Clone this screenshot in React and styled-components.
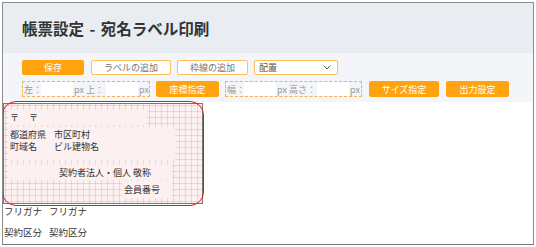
import React from "react";
import styled, { createGlobalStyle } from "styled-components";

const GlobalStyle = createGlobalStyle`
  html, body { margin: 0; padding: 0; background: #fff; }
  body { font-family: "Noto Sans CJK JP", "Noto Sans", sans-serif; }
  * { box-sizing: border-box; }
`;

const Frame = styled.div`
  margin: 2px;
  width: 532px;
  height: 243px;
  border: 1px solid #8c8c8c;
  border-bottom-color: #7a7a7a;
  overflow: hidden;
  background: #fff;
`;

const Header = styled.header`
  height: 50px;
  background: #e9ecf1;
  display: flex;
  align-items: center;
  padding-left: 19px;
`;

const Title = styled.h1`
  margin: 0;
  font-size: 15.5px;
  font-weight: 700;
  color: #333;
  word-spacing: 2px;
`;

const Toolbar = styled.div`
  height: 49px;
  background: #f4f5f9;
  padding: 7px 0 0 19px;
  display: flex;
  flex-direction: column;
  gap: 6px;
`;

const Row = styled.div`
  display: flex;
  align-items: center;
  gap: ${(p) => p.$gap || 6}px;
  height: ${(p) => p.$h || 15}px;
`;

const Button = styled.button`
  width: ${(p) => p.$w}px;
  height: 100%;
  margin: 0 0 0 ${(p) => p.$ml || 0}px;
  padding: 0;
  border-radius: 2px;
  font-family: inherit;
  font-size: 9px;
  line-height: 1;
  cursor: pointer;
  border: 1px solid ${(p) => (p.$primary ? "#ffa30f" : "#ffbd5c")};
  background: ${(p) => (p.$primary ? "#ffa30f" : "#fff")};
  color: ${(p) => (p.$primary ? "#fff" : "#777")};
`;

const Select = styled.div`
  width: 84px;
  height: 100%;
  border: 1px solid #ffbd5c;
  border-radius: 2px;
  background: #fff;
  display: flex;
  align-items: center;
  justify-content: space-between;
  padding: 0 6px 0 4px;
  font-size: 9px;
  color: #555;
`;

const Group = styled.div`
  width: ${(p) => p.$w}px;
  height: 100%;
  border: 1px dashed #f7b24e;
  display: flex;
  align-items: center;
  font-size: 9px;
  color: #999;
  white-space: nowrap;
`;

const Label = styled.span`
  width: ${(p) => (p.$w ? `${p.$w}px` : "auto")};
  flex: none;
  padding-left: ${(p) => p.$pl || 0}px;
`;

const Input = styled.input`
  width: 32px;
  height: 14px;
  border: none;
  background: #fff;
  padding: 0;
  flex: none;
  outline: none;
`;

const CanvasWrap = styled.div`
  position: relative;
  margin-top: 1px;
  width: 200px;
  height: 101px;
`;

const Canvas = styled.div`
  position: relative;
  width: 100%;
  height: 100%;
  border: 1px solid #777;
  background-color: #fdf0f0;
  background-image:
    linear-gradient(to right, rgba(130, 120, 120, 0.2) 1px, transparent 1px),
    linear-gradient(to bottom, rgba(130, 120, 120, 0.2) 1px, transparent 1px);
  background-size: 6px 6px;
  background-position: 1px 1px;
`;

const RoundOutline = styled.div`
  position: absolute;
  left: -1px;
  top: -2px;
  right: -1px;
  bottom: -2px;
  border: 1.5px solid #e8141b;
  border-radius: 14px;
  pointer-events: none;
`;

const Field = styled.div`
  position: absolute;
  left: ${(p) => p.$x}px;
  top: ${(p) => p.$y}px;
  width: ${(p) => p.$w}px;
  height: ${(p) => p.$h}px;
  background: #fdf0f0;
  padding-left: ${(p) => p.$pl || 2}px;
  padding-top: ${(p) => p.$pt || 0}px;
  display: flex;
  flex-direction: column;
  justify-content: ${(p) => (p.$center ? "center" : "flex-start")};
  font-size: 9px;
  color: #333;
  line-height: 12px;
`;

const Line = styled.div`
  display: flex;
  white-space: nowrap;
`;

const Cell = styled.span`
  width: ${(p) => (p.$w ? `${p.$w}px` : "auto")};
  flex: none;
`;

const Outside = styled.div`
  padding-left: 1px;
  padding-top: 1px;
  display: flex;
  flex-direction: column;
  gap: 9px;
  font-size: 9.5px;
  color: #333;
  line-height: 12px;
`;

const Chevron = () => (
  <svg width="8" height="5" viewBox="0 0 8 5" fill="none">
    <path d="M0.7 0.7 L4 4 L7.3 0.7" stroke="#555" strokeWidth="1" />
  </svg>
);

export default function App() {
  return (
    <>
      <GlobalStyle />
      <Frame>
        <Header>
          <Title>帳票設定 - 宛名ラベル印刷</Title>
        </Header>
        <Toolbar>
          <Row $h={15}>
            <Button $primary $w={62}>保存</Button>
            <Button $w={80} $ml={1}>ラベルの追加</Button>
            <Button $w={71}>枠線の追加</Button>
            <Select>
              <span>配置</span>
              <Chevron />
            </Select>
          </Row>
          <Row $h={16}>
            <Group $w={128}>
              <Label $w={18} $pl={1}>左：</Label>
              <Input />
              <Label $w={33} $pl={1}>px 上：</Label>
              <Input />
              <Label $pl={1}>px</Label>
            </Group>
            <Button $primary $w={63}>座標指定</Button>
            <Group $w={137}>
              <Label $w={18} $pl={1}>幅：</Label>
              <Input />
              <Label $w={41} $pl={1}>px 高さ：</Label>
              <Input />
              <Label $pl={1}>px</Label>
            </Group>
            <Button $primary $w={70} $ml={1}>サイズ指定</Button>
            <Button $primary $w={63} $ml={1}>出力設定</Button>
          </Row>
        </Toolbar>
        <CanvasWrap>
          <Canvas>
            <Field $x={4} $y={6} $w={139} $h={15} $pl={2} $center>
              <Line>
                <Cell $w={19}>〒</Cell>
                <Cell>〒</Cell>
              </Line>
            </Field>
            <Field $x={4} $y={23} $w={167} $h={33} $pl={2} $pt={2}>
              <Line>
                <Cell $w={44}>都道府県</Cell>
                <Cell>市区町村</Cell>
              </Line>
              <Line>
                <Cell $w={44}>町域名</Cell>
                <Cell>ビル建物名</Cell>
              </Line>
            </Field>
            <Field $x={4} $y={61} $w={164} $h={15} $pl={51} $center>
              <Line>
                <Cell>契約者法人・個人 敬称</Cell>
              </Line>
            </Field>
            <Field $x={118} $y={77} $w={50} $h={17} $pl={2} $center>
              <Line>
                <Cell>会員番号</Cell>
              </Line>
            </Field>
          </Canvas>
          <RoundOutline />
        </CanvasWrap>
        <Outside>
          <Line>
            <Cell $w={45}>フリガナ</Cell>
            <Cell>フリガナ</Cell>
          </Line>
          <Line>
            <Cell $w={45}>契約区分</Cell>
            <Cell>契約区分</Cell>
          </Line>
        </Outside>
      </Frame>
    </>
  );
}
